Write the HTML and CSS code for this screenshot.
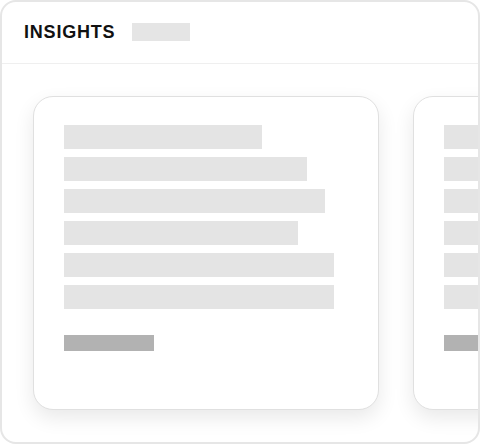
FILE: index.html
```html
<!DOCTYPE html>
<html>
<head>
<meta charset="utf-8">
<link rel="stylesheet" href="styles.css">
</head>
<body>
<div class="frame">
  <div class="header">
    <span class="title">INSIGHTS</span>
    <span class="chip"></span>
  </div>
  <div class="track">
    <div class="card">
      <div class="line" style="width:198px"></div>
      <div class="line" style="width:243px"></div>
      <div class="line" style="width:261px"></div>
      <div class="line" style="width:234px"></div>
      <div class="line" style="width:270px"></div>
      <div class="line" style="width:270px"></div>
      <div class="action"></div>
    </div>
    <div class="card">
      <div class="line" style="width:198px"></div>
      <div class="line" style="width:243px"></div>
      <div class="line" style="width:261px"></div>
      <div class="line" style="width:234px"></div>
      <div class="line" style="width:270px"></div>
      <div class="line" style="width:270px"></div>
      <div class="action"></div>
    </div>
  </div>
</div>
</body>
</html>
```
FILE: styles.css
```css
html, body {
  margin: 0;
  padding: 0;
  background: #ffffff;
}
.frame {
  box-sizing: border-box;
  width: 480px;
  height: 444px;
  border: 2px solid #e6e6e6;
  border-radius: 16px;
  overflow: hidden;
  background: #ffffff;
  font-family: "Liberation Sans", Arial, sans-serif;
}
.header {
  box-sizing: border-box;
  height: 62px;
  display: flex;
  align-items: center;
  padding: 0 0 0 22px;
  border-bottom: 1px solid #efefef;
}
.title {
  font-size: 18px;
  font-weight: 700;
  letter-spacing: 0.8px;
  color: #111111;
}
.chip {
  width: 58px;
  height: 18px;
  background: #e5e5e5;
  margin-left: 17px;
  margin-top: -2px;
}
.track {
  display: flex;
  gap: 34px;
  padding: 32px 0 0 31px;
}
.card {
  flex: 0 0 auto;
  box-sizing: border-box;
  width: 346px;
  height: 314px;
  border: 1.5px solid #e0e0e0;
  border-radius: 20px;
  background: #ffffff;
  box-shadow: 0 8px 20px rgba(0, 0, 0, 0.09);
  padding: 28px 0 0 29.5px;
  display: flex;
  flex-direction: column;
  gap: 8px;
}
.line {
  height: 24px;
  background: #e4e4e4;
}
.action {
  width: 90px;
  height: 16px;
  background: #b2b2b2;
  margin-top: 18px;
}
```
